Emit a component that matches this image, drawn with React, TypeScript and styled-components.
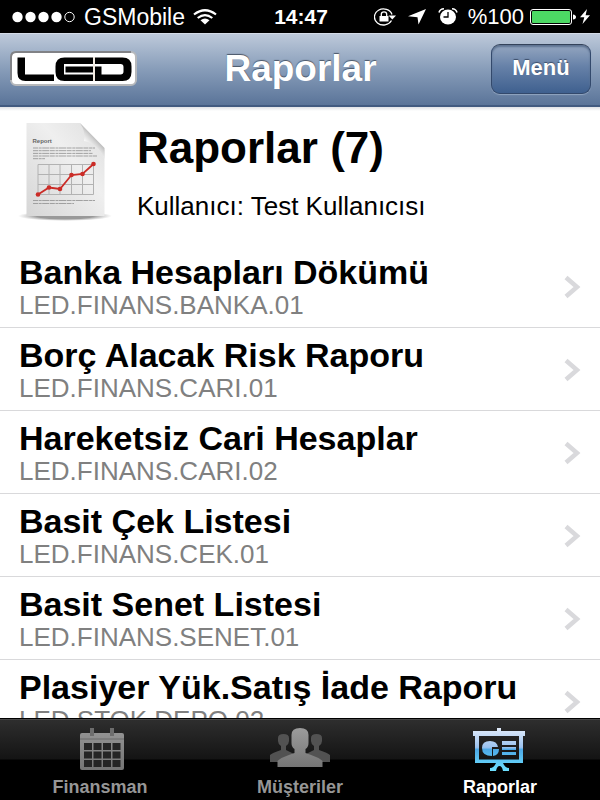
import React from "react";
import styled, { createGlobalStyle } from "styled-components";

const GlobalStyle = createGlobalStyle`
  *, *::before, *::after { box-sizing: border-box; }
  body { margin: 0; background: #fff; }
  button { font-family: inherit; }
`;

const Screen = styled.div`
  display: flex;
  flex-direction: column;
  height: 100vh;
  overflow: hidden;
  background: #fff;
  color: #000;
  font-family: "Liberation Sans", Arial, sans-serif;
`;

const StatusBar = styled.div`
  display: grid;
  grid-template-columns: 1fr auto 1fr;
  align-items: center;
  flex: none;
  height: 33px;
  padding: 0 10px 0 12px;
  background: #000;
  color: #fff;
  font-size: 22px;
  line-height: 32px;
`;

const StatusGroup = styled.div<{ $end?: boolean }>`
  display: flex;
  align-items: center;
  justify-content: ${(p) => (p.$end ? "flex-end" : "flex-start")};
  gap: ${(p) => (p.$end ? "4px" : "8px")};
  white-space: nowrap;
  svg { flex: none; display: block; }
`;

const StatusIcons = styled.div`
  display: flex;
  align-items: center;
  gap: 12px;
  margin-right: 6px;
`;

const Carrier = styled.span`
  font-size: 23px;
`;

const Clock = styled.time`
  font-size: 21px;
  font-weight: bold;
`;

const NavBar = styled.header`
  display: grid;
  grid-template-columns: 1fr auto 1fr;
  align-items: center;
  flex: none;
  height: 74px;
  padding: 0 9px 2px 10px;
  border-top: 1px solid #d3dae6;
  border-bottom: 2px solid #415a80;
  background: linear-gradient(#bdc9da, #899eba 48%, #5a7499);
`;

const NavTitle = styled.h1`
  margin: 0;
  color: #fff;
  font-size: 37px;
  line-height: 40px;
  text-shadow: 0 -1px 1px #4a5667;
`;

const MenuButton = styled.button`
  justify-self: end;
  height: 50px;
  min-width: 100px;
  padding: 0 16px 2px;
  border: 1px solid #33496c;
  border-top-color: #34435a;
  border-radius: 9px;
  background: linear-gradient(#94a6c0, #6681a8 45%, #3f608f);
  box-shadow: inset 0 2px 2px #5d7291, 0 1px 1px #91a5c0;
  color: #fff;
  font-size: 22px;
  font-weight: bold;
  line-height: 26px;
  text-shadow: 0 -1px 1px #3c4d68;
`;

const Content = styled.main`
  flex: 1;
  min-height: 0;
  overflow: hidden;
  background: linear-gradient(#dfe1e6, #fff 4px);
`;

const Summary = styled.section`
  display: flex;
  gap: 24px;
  height: 138px;
  padding: 15px 16px 0;
`;

const SummaryText = styled.div`
  padding-top: 2px;
`;

const SummaryTitle = styled.h2`
  margin: 0;
  font-size: 44px;
  line-height: 48px;
`;

const SummaryUser = styled.p`
  margin: 19px 0 0;
  font-size: 26px;
  line-height: 30px;
`;

const ReportList = styled.ul`
  margin: 0;
  padding: 0;
  list-style: none;
`;

const ReportItem = styled.li`
  border-bottom: 1px solid #d9d9db;
`;

const ReportButton = styled.button`
  display: flex;
  align-items: center;
  justify-content: space-between;
  width: 100%;
  height: 82px;
  padding: 2px 19px 0 19px;
  border: 0;
  background: transparent;
  color: #000;
  text-align: left;
  white-space: nowrap;
`;

const ReportName = styled.span`
  display: block;
  font-size: 34px;
  font-weight: bold;
  line-height: 36px;
`;

const ReportCode = styled.span`
  display: block;
  color: #808080;
  font-size: 26px;
  line-height: 30px;
`;

const TabBar = styled.nav`
  display: grid;
  grid-template-columns: repeat(3, 1fr);
  flex: none;
  height: 82px;
  border-top: 1px solid #000;
  background: linear-gradient(#484848 0 1px, #2e2e2e 1px, #141414 40px, #000 41px);
`;

const Tab = styled.a<{ $active?: boolean }>`
  display: flex;
  flex-direction: column;
  align-items: center;
  padding-top: 6px;
  color: ${(p) => (p.$active ? "#fff" : "#969696")};
  font-size: 18px;
  font-weight: bold;
  line-height: 22px;
  text-decoration: none;
  svg { display: block; margin-bottom: 5px; }
`;

const SignalIcon = () => (
  <svg width="64" height="12" viewBox="0 0 64 12" aria-hidden="true">
    {[5, 18, 31, 44].map((x) => <circle key={x} cx={x + 0.5} cy="6" r="5.2" fill="#fff" />)}
    <circle cx="57.5" cy="6" r="4.7" fill="none" stroke="#fff" />
  </svg>
);

const WifiIcon = () => (
  <svg width="24" height="16" viewBox="0 0 24 16" fill="none" stroke="#fff" strokeWidth="2.2" aria-hidden="true">
    <path d="M1 5.5Q12-3 23 5.5M4.7 9Q12 3.3 19.3 9" />
    <path d="M7.5 11.2Q12 7.8 16.5 11.2L12 15.5Z" fill="#fff" stroke="none" />
  </svg>
);

const LockIcon = () => (
  <svg width="22" height="18" viewBox="0 0 22 18" aria-hidden="true">
    <path d="M17.5 12.5A9 8 0 1 1 18 6.5" fill="none" stroke="#fff" strokeWidth="1.3" />
    <path d="M14.5 7.5H22L18.3 11.5Z" fill="#fff" />
    <rect x="5.5" y="8" width="9" height="5.5" fill="#fff" />
    <path d="M7.3 8V6.3a2.7 2.4 0 0 1 5.4 0V8" fill="none" stroke="#fff" strokeWidth="1.3" />
  </svg>
);

const LocationIcon = () => (
  <svg width="18" height="16" viewBox="0 0 18 16" aria-hidden="true">
    <path d="M18 0 10.5 15.5 9.5 8.3 0 7.3Z" fill="#fff" />
  </svg>
);

const AlarmIcon = () => (
  <svg width="20" height="17" viewBox="0 0 20 17" aria-hidden="true">
    <ellipse cx="10" cy="9" rx="8" ry="7.5" fill="#fff" />
    <path d="M1 4.5Q2 1 6 .8M14 .8Q18 1 19 4.5" fill="none" stroke="#fff" strokeWidth="1.6" />
    <path d="M10 4V9H5.5" fill="none" stroke="#000" strokeWidth="1.3" />
  </svg>
);

const BatteryIcon = () => (
  <svg width="48" height="16" viewBox="0 0 48 16" aria-hidden="true">
    <rect x="2.5" y=".5" width="41" height="15" rx="2.5" fill="none" stroke="#fff" />
    <rect x="4" y="2" width="38" height="12" rx="1" fill="#4cd964" />
    <path d="M45 5.5Q48 6 48 8T45 10.5Z" fill="#fff" />
  </svg>
);

const BoltIcon = () => (
  <svg width="10" height="15" viewBox="0 0 10 15" aria-hidden="true">
    <path d="M7 0 0 8.3H4.3L2.5 15 10 6.3H5.6Z" fill="#fff" />
  </svg>
);

const Logo = () => (
  <svg width="127" height="35" viewBox="0 0 127 35" role="img" aria-label="LED">
    <rect x="1" y="1" width="125" height="33" rx="5" fill="#fff" stroke="#b6b8bb" strokeWidth="2" />
    <path d="M1 29V6q0-5 5-5H121" fill="none" stroke="#818286" strokeWidth="2" />
    <path d="M7.500 6.500h7.500v17h29v6.500H15.500q-8 0-8-8Z" />
    <path d="M83 6.500v6.500H54v10.500h29v6.500H54.500q-9 0-9-9v-5.500q0-9 9-9Z" />
    <path d="M55.500 15.500H83v6H55.500Z" />
    <path d="M85 6.500h27.500q9 0 9 9v5.500q0 9-9 9H85V15.500h6.500v8h19q3 0 3-3v-4.500q0-3-3-3H85Z" />
    <path d="M84 6v24" stroke="#d8c2a8" strokeWidth=".7" />
  </svg>
);

const ReportIcon = () => (
  <svg width="97" height="100" viewBox="0 0 97 100" aria-hidden="true">
    <defs>
      <linearGradient id="sheet" x1="0" y1="1" x2="1" y2="0">
        <stop offset="0" stopColor="#d6d6d6" /><stop offset=".6" stopColor="#efefef" /><stop offset="1" stopColor="#dedede" />
      </linearGradient>
      <linearGradient id="curl" gradientUnits="userSpaceOnUse" x1="66" y1="26" x2="82" y2="11">
        <stop offset="0" stopColor="#c8c8c8" /><stop offset=".3" stopColor="#fafafa" /><stop offset=".6" stopColor="#d6d6d6" /><stop offset="1" stopColor="#8f8f8f" />
      </linearGradient>
      <radialGradient id="floor"><stop offset=".6" stopColor="#777" stopOpacity=".75" /><stop offset="1" stopColor="#999" stopOpacity="0" /></radialGradient>
    </defs>
    <ellipse cx="49" cy="94" rx="47" ry="5" fill="url(#floor)" />
    <path d="M10.500 1H64L88.500 28V94H10.500Z" fill="url(#sheet)" />
    <path d="M64 1Q70 10 68 19Q82 21 88.500 37V26Z" fill="url(#curl)" />
    <text x="16.5" y="21" fontSize="6" fontWeight="bold" fill="#666">Report</text>
    <g stroke="#999" strokeWidth=".9" strokeDasharray="5 .7 3 .5 7 .6">
      <path d="M17 26h62M17 28.700h58M17 31.400h60M17 34h64M17 36.700h12M17 78.500h62M17 81.500h41" />
    </g>
    <path d="M22 42.500h55.500v30H22ZM22 52.500h55.500M22 62.500h55.500M33 42.500v30M44 42.500v30M55.500 42.500v30M66.500 42.500v30" fill="none" stroke="#b2b2b2" />
    <path d="M22 72.500 33 65.500 44 67 55.500 53 66.500 52 77.500 42" fill="none" stroke="#cb2c27" strokeWidth="1.8" />
    {[[22, 72.5], [33, 65.5], [44, 67], [55.5, 53], [66.5, 52], [77.5, 42]].map(([x, y]) => (
      <circle key={x} cx={x} cy={y} r="2.3" fill="#cb2c27" />
    ))}
  </svg>
);

const Chevron = () => (
  <svg width="18" height="24" viewBox="0 0 18 24" aria-hidden="true">
    <path d="M3 2.500 14 12 3 21.500" fill="none" stroke="#d9d9dc" strokeWidth="4.5" />
  </svg>
);

const CalendarIcon = () => (
  <svg width="60" height="46" viewBox="0 0 60 46" aria-hidden="true">
    <defs><linearGradient id="cal" x1="0" y1="0" x2="0" y2="1"><stop stopColor="#929292" /><stop offset="1" stopColor="#747474" /></linearGradient></defs>
    <rect x="10" y="8" width="44" height="37" rx="2" fill="url(#cal)" />
    <path d="M20 3h4v8h-4ZM40 3h4v8h-4Z" fill="#6d6d6d" />
    <path d="M10 14h44" stroke="#6a6a6a" />
    {[18, 26.5, 35].map((y) => [14, 23.5, 33, 42.5].map((x) => <rect key={`${x}-${y}`} x={x} y={y} width="8" height="7" fill="#252525" />))}
  </svg>
);

const PeopleIcon = () => (
  <svg width="60" height="46" viewBox="0 0 60 46" aria-hidden="true">
    <defs><linearGradient id="ppl" x1="0" y1="0" x2="0" y2="1"><stop stopColor="#9c9c9c" /><stop offset="1" stopColor="#757575" /></linearGradient></defs>
    <path id="side" d="M0 37v-7q2-2 11-5v-4q-3-2-3-5v-3q0-4 5.500-4t5.500 4v3q0 3-3 5v4l8 4v8Z" fill="#525252" />
    <path d="M60 37v-7q-2-2-11-5v-4q3-2 3-5v-3q0-4-5.500-4t-5.500 4v3q0 3 3 5v4l-8 4v8Z" fill="#525252" />
    <path d="M7.500 42v-6q2-3 17-8v-4q-3-2-3-6V10q0-7 8.500-7t8.500 7v8q0 4-3 6v4q15 5 17 8v6Z" fill="url(#ppl)" />
  </svg>
);

const PresentationIcon = () => (
  <svg width="60" height="46" viewBox="0 0 60 46" aria-hidden="true">
    <defs>
      <linearGradient id="blue" gradientUnits="userSpaceOnUse" x1="0" y1="3" x2="0" y2="46">
        <stop stopColor="#e2ecfb" /><stop offset=".45" stopColor="#9bc2ef" /><stop offset=".5" stopColor="#4da9e6" /><stop offset="1" stopColor="#6de0ff" />
      </linearGradient>
    </defs>
    <g fill="url(#blue)">
      <path fillRule="evenodd" d="M27 3h4v3h24v5h-2v27H5V11H3V6h24ZM9 11v23.500h40V11Z" />
      <path d="M26 38h7q2 5 6 5v3h-6q-1-5-3.500-5T26 46h-6v-3q4 0 6-5Z" />
      <path d="M20 16q7 0 8 6h-6v9q-10 0-10-8 0-7 8-7Z" />
      <path d="M23 24h6q0 6-6 7ZM32 16h14v4H32ZM32 22h14v3H32ZM32 27h14v3H32Z" />
    </g>
  </svg>
);

const reports = [
  ["Banka Hesapları Dökümü", "LED.FINANS.BANKA.01"],
  ["Borç Alacak Risk Raporu", "LED.FINANS.CARI.01"],
  ["Hareketsiz Cari Hesaplar", "LED.FINANS.CARI.02"],
  ["Basit Çek Listesi", "LED.FINANS.CEK.01"],
  ["Basit Senet Listesi", "LED.FINANS.SENET.01"],
  ["Plasiyer Yük.Satış İade Raporu", "LED.STOK.DEPO.02"],
];

export default function App() {
  return (
    <Screen lang="tr">
      <GlobalStyle />
      <StatusBar>
        <StatusGroup><SignalIcon /><Carrier>GSMobile</Carrier><WifiIcon /></StatusGroup>
        <Clock>14:47</Clock>
        <StatusGroup $end>
          <StatusIcons><LockIcon /><LocationIcon /><AlarmIcon /></StatusIcons>
          <span>%100</span><BatteryIcon /><BoltIcon />
        </StatusGroup>
      </StatusBar>
      <NavBar>
        <Logo />
        <NavTitle>Raporlar</NavTitle>
        <MenuButton type="button">Menü</MenuButton>
      </NavBar>
      <Content>
        <Summary>
          <ReportIcon />
          <SummaryText>
            <SummaryTitle>Raporlar (7)</SummaryTitle>
            <SummaryUser>Kullanıcı: Test Kullanıcısı</SummaryUser>
          </SummaryText>
        </Summary>
        <ReportList>
          {reports.map(([name, code]) => (
            <ReportItem key={name}>
              <ReportButton type="button">
                <span><ReportName>{name}</ReportName><ReportCode>{code}</ReportCode></span>
                <Chevron />
              </ReportButton>
            </ReportItem>
          ))}
        </ReportList>
      </Content>
      <TabBar>
        <Tab href="#finansman"><CalendarIcon />Finansman</Tab>
        <Tab href="#musteriler"><PeopleIcon />Müşteriler</Tab>
        <Tab href="#raporlar" $active aria-current="page"><PresentationIcon />Raporlar</Tab>
      </TabBar>
    </Screen>
  );
}
